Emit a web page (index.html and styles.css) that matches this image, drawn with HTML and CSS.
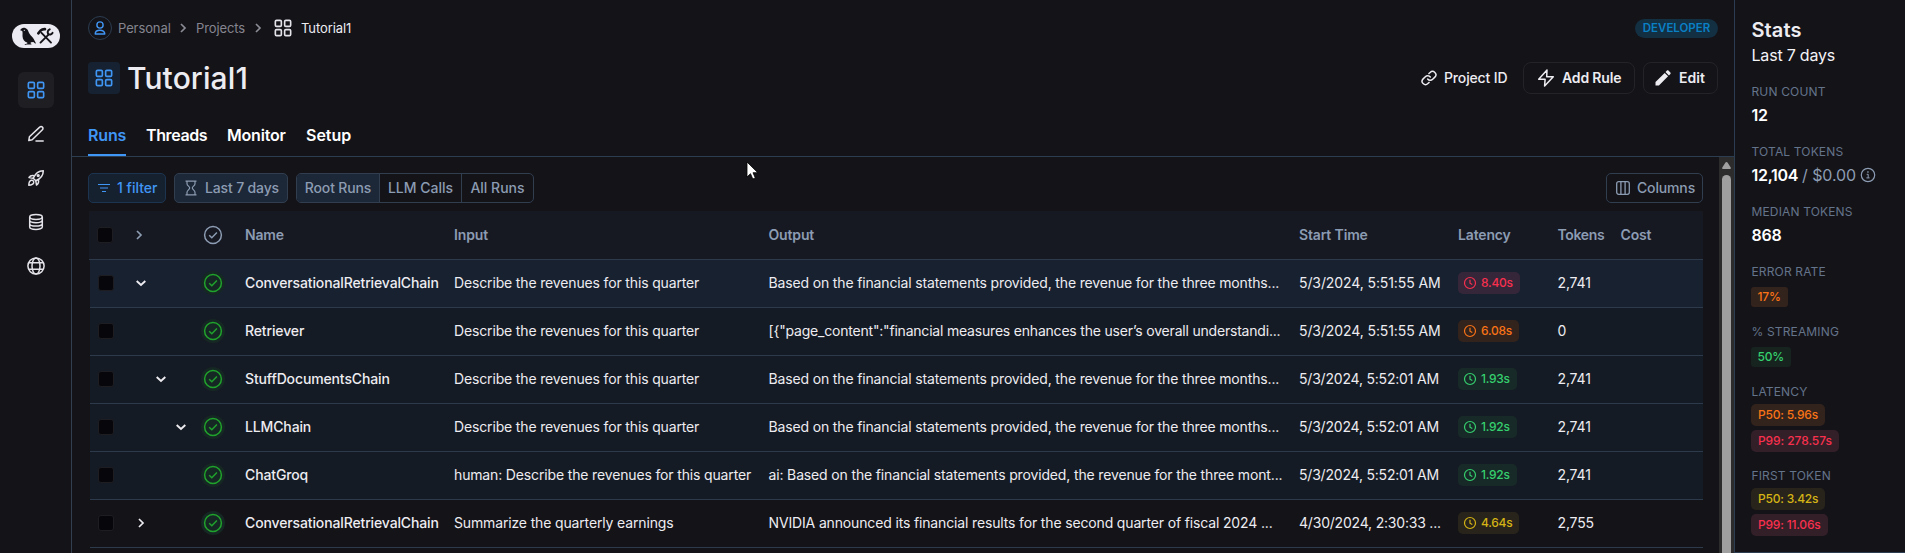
FILE: index.html
```html
<!DOCTYPE html>
<html lang="en">
<head>
<meta charset="utf-8">
<title>Tutorial1</title>
<link rel="stylesheet" href="styles.css">
</head>
<body>
<svg class="defs" width="0" height="0">
  <symbol id="grid" viewBox="0 0 24 24"><g fill="none" stroke="currentColor" stroke-width="2.2"><rect x="1.8" y="1.8" width="8" height="8" rx="1.6"/><rect x="14.2" y="1.8" width="8" height="8" rx="1.6"/><rect x="1.8" y="14.2" width="8" height="8" rx="1.6"/><rect x="14.2" y="14.2" width="8" height="8" rx="1.6"/></g></symbol>
  <symbol id="right" viewBox="0 0 16 16"><path d="M6 4l4 4-4 4" fill="none" stroke="currentColor" stroke-width="1.7"/></symbol>
  <symbol id="down" viewBox="0 0 16 16"><path d="M3.7 6l4.300 4 4.300-4" fill="none" stroke="currentColor" stroke-width="1.9"/></symbol>
  <symbol id="check" viewBox="0 0 24 24"><circle cx="12" cy="12" r="8.400" fill="none" stroke="currentColor" stroke-width="1.5"/><path d="M8.200 12.200l2.600 2.500 5.100-5.200" fill="none" stroke="currentColor" stroke-width="1.5"/></symbol>
  <symbol id="clock" viewBox="0 0 14 14"><circle cx="7" cy="7" r="5.500" fill="none" stroke="currentColor" stroke-width="1.200"/><path d="M7 3.800V7.200l2.300 1.300" fill="none" stroke="currentColor" stroke-width="1.200"/></symbol>
</svg>
<div class="app">
  <nav class="sidebar">
    <div class="logo">
      <svg width="48" height="24" viewBox="0 0 48 24" fill="#141318">
        <path d="M8.200 6.300C9 4.300 11 3.300 13.200 4c2 .6 2.800 2.200 3.500 4.200.8 2.300 2.800 3.500 4.200 5.600 1.200 1.700 1.800 3.300 2.900 5.200l-.4.700-2-1.700-2.600.2-.2 1.300 1 .5-.3.600h-4.600l-1.800.3-.2-.7 2.700-.7-.2-1.100c-2.700-.7-4.700-3.400-4.700-6.500 0-2 .3-3.800-.3-5z"/>
        <circle cx="12.300" cy="6.300" r=".6" fill="#ebe9f1"/>
        <g stroke="#141318" fill="none" stroke-linecap="round"><path d="M29.500 8.800L39 18.600" stroke-width="1.900"/><path d="M28.500 18.600l8-8" stroke-width="1.900"/><path d="M26.300 9.300l2.500-2.900c1.200-1.200 2.600-1.400 4.200-1.300" stroke-width="2.600"/><path d="M37.700 5.400c-2 .9-2.500 2.700-1.500 4.600 1.400 1.100 3.200.7 4.300-1.100" stroke-width="2"/></g>
      </svg>
    </div>
    <a class="nav-item active"><svg width="18" height="18"><use href="#grid"/></svg></a>
    <a class="nav-item"><svg width="18" height="18" viewBox="0 0 18 18" fill="none" stroke="currentColor" stroke-width="1.500" stroke-linejoin="round" stroke-linecap="round"><path d="M1.800 15.500l.6-3.700L12.700 2.100a1.900 1.900 0 0 1 2.700 0 1.900 1.900 0 0 1 0 2.700L5.200 14.700z"/><path d="M9 15.900h7.200"/></svg></a>
    <a class="nav-item"><svg width="18" height="18" viewBox="0 0 18 18" fill="none" stroke="currentColor" stroke-width="1.500" stroke-linejoin="round"><path d="M6.200 9.200C8 5 11.400 1.700 16.300 1.700c0 4.900-3.300 8.300-7.500 10.100z"/><circle cx="11.200" cy="6.600" r=".9"/><path d="M7.200 6.700C5 6 3.200 6.600 2 8.500l4.200.7M11.300 10.800c.7 2.200.1 4-1.800 5.200l-.7-4.200"/><path d="M4.200 11.300c-1.700.5-2.300 2.400-2.400 4.900 2.500-.1 4.400-.7 4.900-2.400.3-1.700-1-2.900-2.500-2.500z"/></svg></a>
    <a class="nav-item"><svg width="18" height="18" viewBox="0 0 18 18" fill="none" stroke="currentColor" stroke-width="1.500"><ellipse cx="9" cy="4" rx="6.300" ry="2.400"/><path d="M2.700 4v10c0 3.200 12.600 3.200 12.600 0V4M2.700 7.300c0 3.200 12.600 3.200 12.600 0M2.700 10.700c0 3.200 12.600 3.200 12.600 0"/></svg></a>
    <a class="nav-item"><svg width="18" height="18" viewBox="0 0 18 18" fill="none" stroke="currentColor" stroke-width="1.500"><circle cx="9" cy="9" r="8.100"/><ellipse cx="9" cy="9" rx="4" ry="8.100"/><path d="M2 5.800h14M2 12.200h14"/></svg></a>
  </nav>

  <main class="main">
    <header class="header">
      <div class="crumb-row">
        <div class="crumbs">
          <span class="avatar"><svg width="12" height="14" viewBox="0 0 12 14" fill="none" stroke="currentColor" stroke-width="1.400"><circle cx="6" cy="4" r="3.100"/><path d="M1.200 13c0-5 9.600-5 9.600 0z" stroke-linejoin="round"/></svg></span>
          <span class="crumb personal">Personal</span>
          <svg class="sep" width="16" height="16"><use href="#right"/></svg>
          <span class="crumb projects">Projects</span>
          <svg class="sep" width="16" height="16"><use href="#right"/></svg>
          <svg class="crumb-icon" width="18" height="18"><use href="#grid"/></svg>
          <span class="crumb current">Tutorial1</span>
        </div>
        <span class="plan">DEVELOPER</span>
      </div>
      <div class="title-row">
        <span class="title-icon"><svg width="18" height="18"><use href="#grid"/></svg></span>
        <h1>Tutorial1</h1>
        <div class="actions">
          <a class="project-id"><svg width="16" height="16" viewBox="0 0 24 24" fill="none" stroke="currentColor" stroke-width="2.200" stroke-linecap="round"><path d="M10 13.500a5 5 0 0 0 7.500.5l3.300-3.300a5 5 0 0 0-7.100-7.100l-1.800 1.800"/><path d="M14 10.500a5 5 0 0 0-7.500-.5l-3.300 3.300a5 5 0 0 0 7.100 7.100l1.800-1.800"/></svg>Project ID</a>
          <a class="button rule"><svg width="18" height="20" viewBox="0 0 18 20" fill="none" stroke="currentColor" stroke-width="1.500" stroke-linejoin="round"><path d="M10 2L1.700 11.300h6.400L7.600 18l8.700-9.300H9.700z"/></svg>Add Rule</a>
          <a class="button edit"><svg width="16" height="16" viewBox="0 0 16 16" fill="currentColor"><path d="M.5 15.500v-3.400l9.200-9.200 3.400 3.400-9.200 9.200zM10.500 2.100L12 .6c.4-.4 1-.4 1.400 0l2 2c.4.4.4 1 0 1.400l-1.500 1.500z"/></svg>Edit</a>
        </div>
      </div>
      <div class="tabs">
        <a class="tab selected t-runs">Runs</a><a class="tab t-threads">Threads</a><a class="tab t-monitor">Monitor</a><a class="tab t-setup">Setup</a>
      </div>
    </header>

    <div class="body">
      <div class="content">
        <div class="toolbar">
          <button class="tool filter"><svg width="12" height="10" viewBox="0 0 12 10" fill="none" stroke="currentColor" stroke-width="1.200"><path d="M0 1.500h12M2 5h8M4 8.500h4"/></svg>1 filter</button>
          <button class="tool days"><svg width="12" height="16" viewBox="0 0 12 16" fill="none" stroke="currentColor" stroke-width="1.200"><path d="M.5 1.200h11M.5 14.800h11M2 1.200v2.500c0 2 2.700 2.800 2.700 4.300S2 10.300 2 12.300v2.500M10 1.200v2.500c0 2-2.700 2.800-2.700 4.300s2.700 2.300 2.700 4.300v2.500"/></svg>Last 7 days</button>
          <div class="segments"><button class="seg on root">Root Runs</button><button class="seg llm">LLM Calls</button><button class="seg all">All Runs</button></div>
          <button class="tool columns"><svg width="14" height="14" viewBox="0 0 14 14" fill="none" stroke="currentColor" stroke-width="1.300"><rect x=".7" y=".7" width="12.600" height="12.600" rx="2"/><path d="M4.900 1v12M9.100 1v12"/></svg>Columns</button>
        </div>
        <div class="table">
          <div class="row head">
            <span class="box"></span>
            <span class="expand"><svg width="16" height="16"><use href="#right"/></svg></span>
            <span class="status"><svg width="24" height="24"><use href="#check"/></svg></span>
            <span>Name</span><span>Input</span><span>Output</span><span>Start Time</span><span>Latency</span><span class="tokens">Tokens</span><span>Cost</span>
          </div>
          <div class="row hover">
            <span class="box"></span><span class="expand"><svg width="16" height="16"><use href="#down"/></svg></span>
            <span class="status"><svg width="24" height="24"><use href="#check"/></svg></span>
            <span class="name">ConversationalRetrievalChain</span><span>Describe the revenues for this quarter</span><span>Based on the financial statements provided, the revenue for the three months...</span><span class="time">5/3/2024, 5:51:55 AM</span>
            <span><b class="badge red"><svg width="14" height="14"><use href="#clock"/></svg>8.40s</b></span><span>2,741</span>
          </div>
          <div class="row child">
            <span class="box"></span><span class="expand"></span>
            <span class="status"><svg width="24" height="24"><use href="#check"/></svg></span>
            <span class="name">Retriever</span><span>Describe the revenues for this quarter</span><span class="json">[{"page_content":"financial measures enhances the user’s overall understandi...</span><span class="time">5/3/2024, 5:51:55 AM</span>
            <span><b class="badge orange"><svg width="14" height="14"><use href="#clock"/></svg>6.08s</b></span><span>0</span>
          </div>
          <div class="row child">
            <span class="box"></span><span class="expand depth-1"><svg width="16" height="16"><use href="#down"/></svg></span>
            <span class="status"><svg width="24" height="24"><use href="#check"/></svg></span>
            <span class="name">StuffDocumentsChain</span><span>Describe the revenues for this quarter</span><span>Based on the financial statements provided, the revenue for the three months...</span><span class="time tight">5/3/2024, 5:52:01 AM</span>
            <span><b class="badge green"><svg width="14" height="14"><use href="#clock"/></svg>1.93s</b></span><span>2,741</span>
          </div>
          <div class="row child">
            <span class="box"></span><span class="expand depth-2"><svg width="16" height="16"><use href="#down"/></svg></span>
            <span class="status"><svg width="24" height="24"><use href="#check"/></svg></span>
            <span class="name">LLMChain</span><span>Describe the revenues for this quarter</span><span>Based on the financial statements provided, the revenue for the three months...</span><span class="time tight">5/3/2024, 5:52:01 AM</span>
            <span><b class="badge green"><svg width="14" height="14"><use href="#clock"/></svg>1.92s</b></span><span>2,741</span>
          </div>
          <div class="row child">
            <span class="box"></span><span class="expand"></span>
            <span class="status"><svg width="24" height="24"><use href="#check"/></svg></span>
            <span class="name">ChatGroq</span><span>human: Describe the revenues for this quarter</span><span>ai: Based on the financial statements provided, the revenue for the three mont...</span><span class="time tight">5/3/2024, 5:52:01 AM</span>
            <span><b class="badge green"><svg width="14" height="14"><use href="#clock"/></svg>1.92s</b></span><span>2,741</span>
          </div>
          <div class="row">
            <span class="box"></span><span class="expand"><svg width="16" height="16"><use href="#right"/></svg></span>
            <span class="status"><svg width="24" height="24"><use href="#check"/></svg></span>
            <span class="name">ConversationalRetrievalChain</span><span>Summarize the quarterly earnings</span><span>NVIDIA announced its financial results for the second quarter of fiscal 2024 ...</span><span class="time tight">4/30/2024, 2:30:33 ...</span>
            <span><b class="badge yellow"><svg width="14" height="14"><use href="#clock"/></svg>4.64s</b></span><span>2,755</span>
          </div>
        </div>
      </div>
      <div class="scrollbar">
        <svg width="15" height="18" viewBox="0 0 15 18"><path d="M7.500 5c.5 0 .9.300 1.200.8l3 4.700c.4.800 0 1.500-.8 1.500H4.100c-.8 0-1.200-.7-.8-1.500l3-4.700c.3-.5.7-.8 1.200-.8z" fill="#9f9f9f"/></svg>
        <div class="thumb"></div>
      </div>
    </div>
  </main>

  <aside class="stats">
    <h2>Stats</h2>
    <p class="range">Last 7 days</p>
    <section><h3>RUN COUNT</h3><p class="value">12</p></section>
    <section><h3>TOTAL TOKENS</h3><p class="value"><span class="count">12,104</span> <span class="cost">/ $0.00</span><svg width="16" height="16" viewBox="0 0 16 16" fill="none" stroke="currentColor" stroke-width="1.200"><circle cx="8" cy="8" r="6.700"/><path d="M6.700 7.300h1.500v3.500M6.400 10.900h3.200" stroke-width="1"/><path d="M7.300 5h1.300" stroke-width="1.300"/></svg></p></section>
    <section><h3>MEDIAN TOKENS</h3><p class="value">868</p></section>
    <section><h3>ERROR RATE</h3><b class="rate orange">17%</b></section>
    <section><h3>% STREAMING</h3><b class="rate green">50%</b></section>
    <section class="pair"><h3>LATENCY</h3><b class="pill orange">P50: 5.96s</b><b class="pill red wide">P99: 278.57s</b></section>
    <section class="pair"><h3>FIRST TOKEN</h3><b class="pill yellow">P50: 3.42s</b><b class="pill red">P99: 11.06s</b></section>
  </aside>
</div>
<svg class="pointer" width="14" height="20" viewBox="0 0 14 20"><path d="M1 1v15l3.500-3.300L6.800 18l2.500-1.100L7 11.700h4.800z" fill="#fff" stroke="#000" stroke-width=".8"/></svg>
</body>
</html>
```
FILE: styles.css
```css
* { box-sizing: border-box; }
body { margin: 0; background: #141318; color: #edecf1; font: 14px/20px Inter, "Open Sans", sans-serif; letter-spacing: -0.15px; overflow: hidden; }
svg { display: block; flex: none; }
.defs { position: absolute; }
h1, h2, h3, p { margin: 0; font-weight: 500; }
button { font: inherit; letter-spacing: inherit; color: inherit; background: none; padding: 0; }
.app { display: flex; height: 553px; }

.sidebar { width: 72px; flex: none; border-right: 1px solid #323f50; display: flex; flex-direction: column; align-items: center; gap: 8px; padding-top: 24px; }
.logo { width: 48px; height: 24px; border-radius: 12px; background: #ebe9f1; margin-bottom: 16px; }
.nav-item { width: 36px; height: 36px; flex: none; border-radius: 6px; display: grid; place-items: center; color: #e4e3e9; }
.nav-item.active { background: #1f1f23; color: #4096f5; }

.main { width: 1662px; flex: none; display: flex; flex-direction: column; }
.header { height: 157px; flex: none; border-bottom: 1px solid #2c3d52; padding: 16px 16px 0; display: flex; flex-direction: column; }
.crumb-row { display: flex; justify-content: space-between; align-items: center; height: 24px; }
.crumbs { display: flex; align-items: center; font-size: 13px; color: #85858f; letter-spacing: -0.1px; }
.avatar { width: 24px; height: 24px; border: 1px solid #2c3d52; border-radius: 50%; display: grid; place-items: center; color: #4096f5; margin-right: 6px; }
.personal { width: 57px; }
.projects { width: 54px; margin-left: 5px; }
.sep { color: #8b8b95; }
.crumb-icon { color: #e4e3e9; margin: 0 9px 0 8px; }
.current { color: #edecf1; }
.plan { width: 83px; height: 19px; border-radius: 10px; background: #132f42; color: #0a80c5; font-size: 11.500px; line-height: 19px; font-weight: 600; letter-spacing: 0; text-align: center; margin-top: 1px; }

.title-row { display: flex; align-items: center; height: 32px; margin-top: 22px; }
.title-icon { width: 32px; height: 32px; border-radius: 4px; background: #162231; color: #4096f5; display: grid; place-items: center; margin-right: 7px; }
h1 { font-size: 30px; line-height: 36px; letter-spacing: 0.1px; }
.actions { display: flex; align-items: center; margin-left: auto; font-weight: 500; }
.project-id { display: flex; gap: 7px; align-items: center; width: 102px; }
.button { height: 32px; border: 1px solid #232328; border-radius: 8px; display: flex; align-items: center; font-weight: 600; }
.rule { width: 112px; padding-left: 13px; gap: 7px; margin-right: 8px; }
.edit { width: 75px; padding-left: 11px; gap: 8px; letter-spacing: 0; }

.tabs { display: flex; gap: 21px; margin-top: 26px; height: 36px; font-size: 16px; line-height: 31px; font-weight: 600; color: #fff; }
.tab { height: 36px; white-space: nowrap; }
.selected { color: #4096f5; border-bottom: 2px solid #4096f5; }
.t-runs { width: 38px; }
.t-threads { width: 61px; letter-spacing: -0.4px; margin-left: -1px; }
.t-monitor { width: 58px; letter-spacing: -0.2px; margin-left: -1px; }
.t-setup { letter-spacing: 0; }

.body { flex: 1; display: flex; min-height: 0; }
.content { width: 1647px; flex: none; padding: 16px 16px 0; overflow: hidden; }
.toolbar { display: flex; height: 30px; color: #8c9cb2; font-weight: 500; margin-bottom: 8px; }
.tool { height: 30px; border: 1px solid #303e50; border-radius: 5px; display: flex; align-items: center; white-space: nowrap; }
.filter { width: 78px; padding-left: 9px; gap: 7px; color: #4096f5; background: #16212f; border-color: #1d3450; letter-spacing: 0; margin-right: 8px; }
.days { width: 114px; padding-left: 10px; gap: 8px; background: #1c2737; margin-right: 8px; }
.segments { display: flex; border: 1px solid #303e50; border-radius: 5px; width: 238px; overflow: hidden; }
.seg { border: 0; border-right: 1px solid #303e50; white-space: nowrap; }
.seg.on { background: #1c2737; }
.root { width: 83px; }
.llm { width: 82px; letter-spacing: 0; }
.all { width: 71px; border-right: 0; letter-spacing: 0; }
.columns { width: 97px; padding-left: 9px; gap: 7px; margin-left: auto; margin-right: 0; }

.table { margin-left: 2px; width: 1613px; }
.row { display: grid; grid-template-columns: 32px 76px 47px 209px 314.500px 530.500px 159px 99.500px 63px 1fr; align-items: center; height: 48px; padding-bottom: 1px; border-bottom: 1px solid #2c3a4c; white-space: nowrap; }
.head { height: 49px; background: #161822; color: #8c9cb2; font-weight: 600; margin-left: -1px; padding-left: 1px; padding-bottom: 0; }
.head .tokens { letter-spacing: -0.35px; }
.hover { background: #172130; }
.child { background: #151b24; }
.box { width: 16px; height: 16px; margin-left: 8px; border: 1px solid #1d1d22; border-radius: 3px; background: #07070b; }
.head .box { margin-left: 7px; }
.expand { padding-left: 11px; }
.head .expand { padding-left: 9px; }
.depth-1 { padding-left: 31px; }
.depth-2 { padding-left: 51px; }
.status { width: 24px; height: 24px; margin-left: 3px; border-radius: 50%; background: #162823; color: #20a32c; }
.head .status { background: none; color: #8c9cb2; }
.name { font-weight: 500; letter-spacing: -0.13px; }
.json { letter-spacing: -0.2px; }
.time { letter-spacing: -0.1px; }
.tight { letter-spacing: -0.2px; }
.badge { display: inline-flex; align-items: center; gap: 4px; height: 22px; padding: 0 7px 0 5px; border-radius: 5px; font-size: 12px; font-weight: 500; letter-spacing: -0.25px; vertical-align: middle; }
.red { color: #f8304e; background: #331f28; }
.hover .red { background: #36263a; }
.orange { color: #f97316; background: #33231d; }
.green { color: #35d06e; background: #182a28; }
.yellow { color: #d4b315; background: #29241b; }

.scrollbar { width: 15px; background: #2c2c2c; }
.thumb { width: 9px; height: 390px; margin-left: 3px; border-radius: 5px; background: #9f9f9f; }

.stats { flex: 1; border-left: 1px solid #2c3d52; border-bottom: 1px solid #2c3d52; padding: 17px 0 0 16.500px; }
h2 { font-size: 20px; line-height: 26px; font-weight: 600; letter-spacing: 0.1px; }
.range { font-size: 16px; line-height: 24px; font-weight: 400; letter-spacing: -0.2px; margin-bottom: 14px; color: #f4f4f7; }
section { height: 60px; }
h3 { font-size: 12px; line-height: 20px; font-weight: 400; letter-spacing: 0.15px; color: #64748b; padding-top: 1px; }
.value { display: flex; align-items: center; font-size: 16px; line-height: 24px; font-weight: 600; color: #fff; letter-spacing: -0.3px; margin-top: 1px; }
.cost { color: #8c9cb2; font-weight: 400; margin-left: 4px; letter-spacing: -0.1px; }
.value svg { color: #8c9cb2; margin-left: 4px; }
.rate, .pill { display: block; width: max-content; margin-left: -1px; font-size: 12px; font-weight: 500; letter-spacing: -0.2px; }
.rate { height: 20px; line-height: 20px; padding: 0 7px; border-radius: 3px; margin-top: 5px; }
.pill { height: 22px; line-height: 22px; padding: 0 7px 0 7.500px; border-radius: 5px; margin-top: 4px; }
.pill.wide { letter-spacing: -0.08px; }
.stats .green { background: #17231f; }
.pair { height: 84px; }
.pair h3 { margin-bottom: -2px; }

.pointer { position: absolute; left: 746px; top: 161px; }
```
